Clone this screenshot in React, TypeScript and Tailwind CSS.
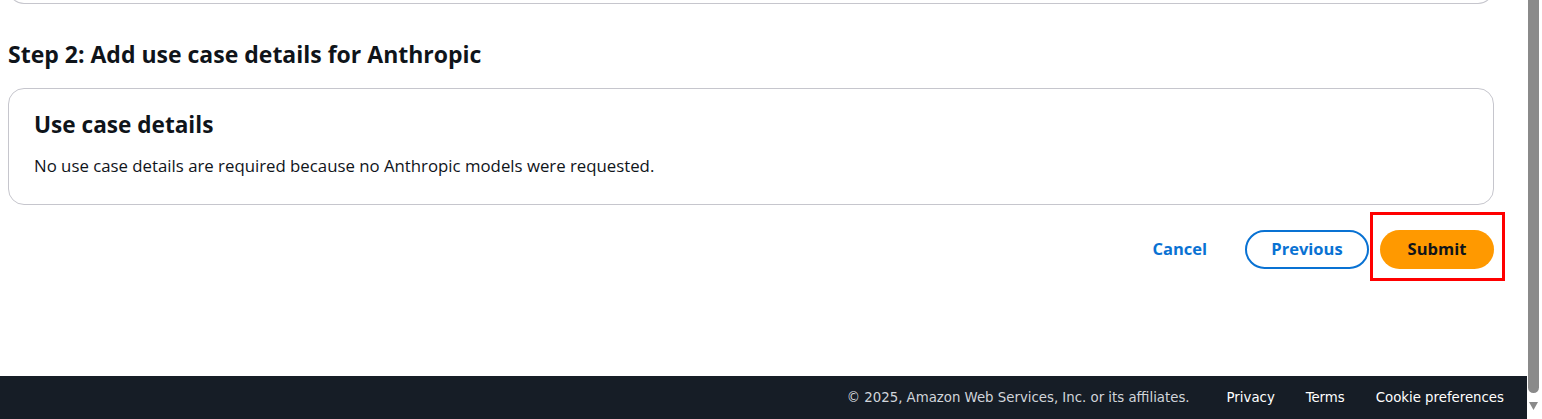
import React from "react"

const font = { fontFamily: '"Open Sans", "Noto Sans", Arial, sans-serif' }
const narrow = { fontFamily: '"Liberation Sans Narrow", "DejaVu Sans Condensed", "Open Sans", sans-serif' }

function FooterBar() {
  return (
    <footer
      className="h-[43px] bg-[#161d26] flex items-center justify-end pr-[23px] text-[14.8px] font-stretch-condensed text-[#d1d5db]"
      style={narrow}
    >
      <span className="mr-[37px]">© 2025, Amazon Web Services, Inc. or its affiliates.</span>
      <a className="mr-[31px] text-white">Privacy</a>
      <a className="mr-[31px] text-white">Terms</a>
      <a className="text-white">Cookie preferences</a>
    </footer>
  )
}

function ScrollTrack() {
  return (
    <div className="w-[15px] h-[419px] bg-white flex flex-col items-start pl-[1px]">
      <div className="w-[11px] flex-1 mb-[8px] bg-[#8a8a8a] rounded-b-[6px]" />
      <svg width="11" height="10" viewBox="0 0 11 10" className="mb-[8px]">
        <path d="M1 1 L10 1 L5.5 9 Z" fill="#8a8a8a" />
      </svg>
    </div>
  )
}

export default function App() {
  return (
    <div className="w-[1542px] h-[419px] flex bg-white overflow-hidden text-[#0f141a]" style={font}>
      <div className="flex-1 flex flex-col">
        <main className="flex-1 pl-[8px] pr-[33px]">
          {/* bottom of the previous step's card */}
          <div className="h-[3px] -mt-[30px] pt-[30px] border border-t-0 border-[#c6c6cd] rounded-b-[16px] box-content" />

          <h2 className="mt-[35px] text-[23px] leading-[30px] font-bold">
            Step 2: Add use case details for Anthropic
          </h2>

          <section className="mt-[19px] h-[117px] border border-[#c6c6cd] rounded-[16px] px-[25px] pt-[21px]">
            <h3 className="text-[22.6px] leading-[30px] font-bold">Use case details</h3>
            <p className="mt-[15px] text-[16.8px] leading-[22px]">
              No use case details are required because no Anthropic models were requested.
            </p>
          </section>

          <div className="mt-[25px] flex items-center justify-end gap-[11px]">
            <button className="h-[39px] px-[20px] mr-[7px] text-[16.5px] font-bold text-[#0972d3]">Cancel</button>
            <button className="h-[39px] w-[124px] rounded-full border-2 border-[#0972d3] text-[16.5px] font-bold text-[#0972d3]">
              Previous
            </button>
            <div className="relative">
              <button className="h-[39px] w-[114px] rounded-full bg-[#ff9900] text-[16.5px] font-bold text-[#0f141a]">
                Submit
              </button>
              <div className="absolute -left-[10px] -top-[18px] w-[135px] h-[69px] border-[3px] border-[#ff0000]" />
            </div>
          </div>
        </main>
        <FooterBar />
      </div>
      <ScrollTrack />
    </div>
  )
}
